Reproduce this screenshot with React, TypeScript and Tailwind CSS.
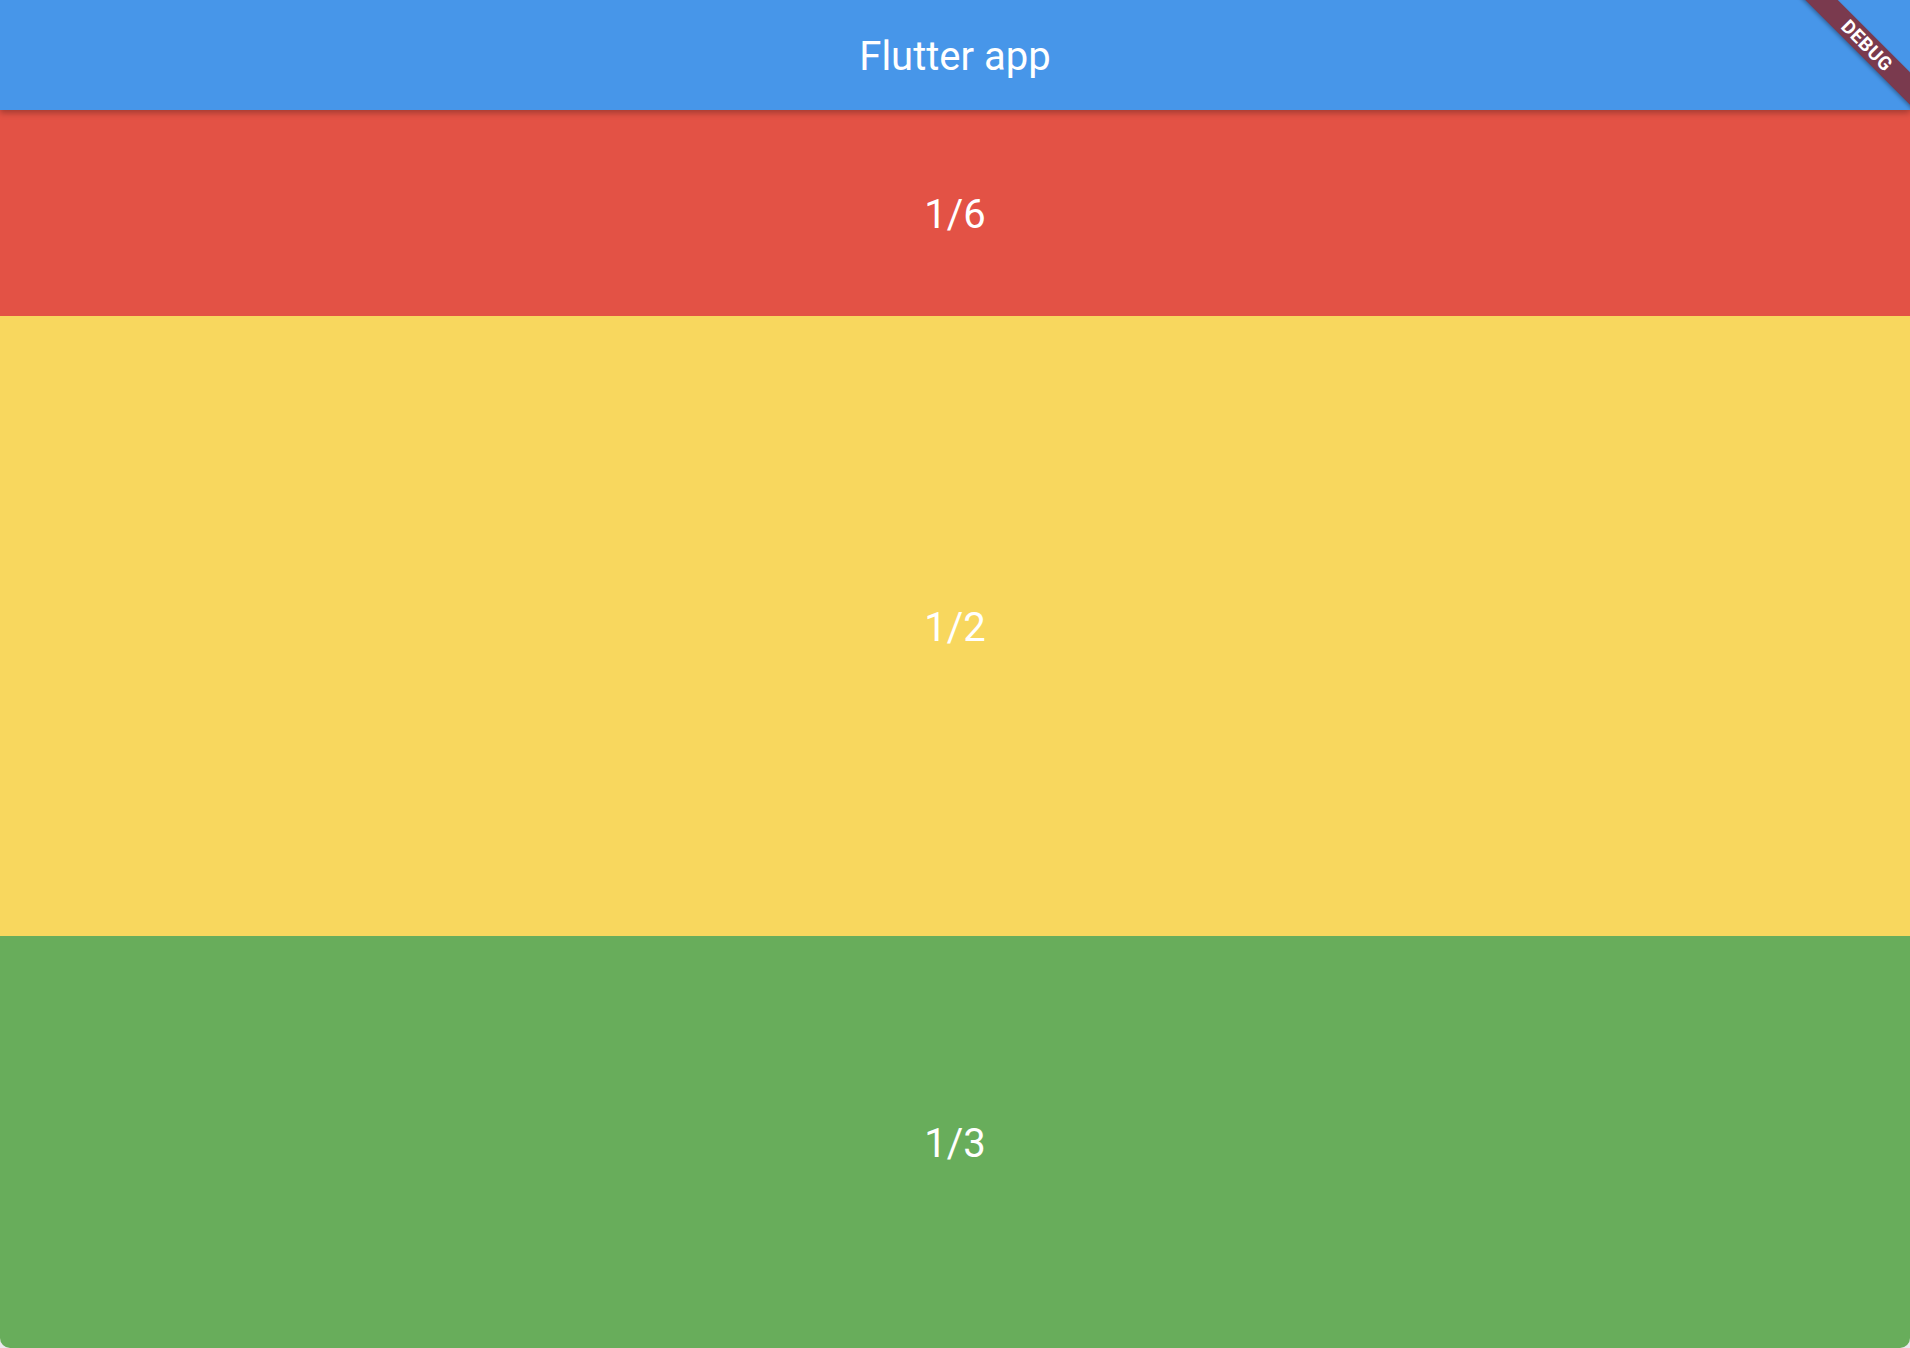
import React from "react";

export default function App() {
  return (
    <div
      className="relative w-[1910px] h-[1348px] overflow-hidden bg-[#ece8ee]"
      style={{ fontFamily: "Roboto, 'Noto Sans', sans-serif" }}
    >
      <div className="flex flex-col h-full rounded-b-[10px] overflow-hidden">
        <header className="relative z-10 h-[110px] shrink-0 bg-[#4796e9] flex items-center justify-center pt-[3px] shadow-[0_3px_6px_rgba(0,0,0,0.28)]">
          <span className="text-white text-[40px] leading-none">Flutter app</span>
        </header>
        <div className="h-[206px] shrink-0 bg-[#e35245] flex items-center justify-center pt-[3px]">
          <span className="text-white text-[40px] leading-none">1/6</span>
        </div>
        <div className="h-[620px] shrink-0 bg-[#f8d75e] flex items-center justify-center pt-[3px]">
          <span className="text-white text-[40px] leading-none">1/2</span>
        </div>
        <div className="flex-1 bg-[#68ad5b] flex items-center justify-center pt-[3px]">
          <span className="text-white text-[40px] leading-none">1/3</span>
        </div>
      </div>
      <div className="absolute right-[-57px] top-[34px] w-[200px] h-[23px] rotate-45 bg-[#7a3a4e] z-20 flex items-center justify-center shadow-[0_2px_4px_rgba(0,0,0,0.3)]">
        <span className="text-white font-bold text-[19px] leading-none tracking-[0.5px]">DEBUG</span>
      </div>
    </div>
  );
}
